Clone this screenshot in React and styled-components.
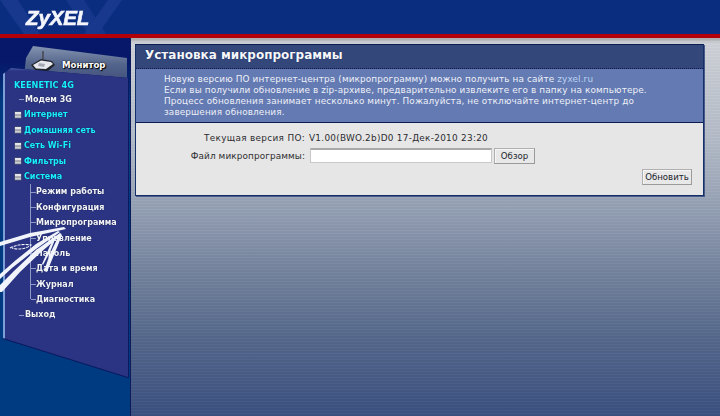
import React from "react";
import styled, { createGlobalStyle } from "styled-components";

const Global = createGlobalStyle`
  html, body { margin: 0; padding: 0; background: #003a80; }
  body { width: 720px; height: 416px; overflow: hidden; font-family: "DejaVu Sans", sans-serif; }
`;

const Page = styled.div`
  position: relative;
  width: 720px;
  height: 416px;
  display: flex;
  flex-direction: column;
  overflow: hidden;
`;

const Header = styled.header`
  position: relative;
  height: 34px;
  flex: none;
  background: #0b2d80;
  display: flex;
  align-items: center;
  padding-left: 26px;
  overflow: hidden;
`;

const HeaderArt = styled.svg`
  position: absolute;
  left: 0;
  top: 0;
`;

const Logo = styled.div`
  position: relative;
  font-family: "Liberation Sans", sans-serif;
  font-weight: 700;
  font-style: italic;
  font-size: 20.5px;
  letter-spacing: -0.1px;
  color: #f4f6fb;
  line-height: 34px;
  margin-top: 1px;
  -webkit-text-stroke: 0.6px #f4f6fb;
  filter: blur(0.3px);
`;

const RedRule = styled.div`
  height: 4px;
  flex: none;
  background: #b20008;
`;

const Body = styled.div`
  flex: 1;
  display: flex;
  min-height: 0;
`;

const Side = styled.aside`
  width: 130px;
  flex: none;
  background: linear-gradient(180deg, #07186a 0, #07186a 24px, #003a80 64px, #003a80 100%);
  padding-top: 8px;
  display: flex;
  flex-direction: column;
  box-sizing: border-box;
`;

const Tab = styled.div`
  width: 105px;
  height: 40px;
  margin-left: 23px;
  flex: none;
  background: linear-gradient(180deg, #8494b0 0, #54658c 45%, #3a4a78 100%);
  clip-path: polygon(3px 12px, 10px 0, 104px 12px, 104px 40px, 0 40px);
  display: flex;
  align-items: flex-start;
  gap: 6px;
  padding: 14px 0 0 7px;
  box-sizing: border-box;
`;

const TabLabel = styled.span`
  font-size: 8.6px;
  font-weight: 700;
  color: #fff;
  line-height: 12px;
  margin-top: -1px;
  text-shadow: 0 0 2px #000, 1px 1px 1px #000;
`;

const PanelEdge = styled.div`
  margin: -18px 0 0 0;
  width: 129px;
  height: 309px;
  flex: none;
  filter: drop-shadow(0 1px 0 #0a1a60) drop-shadow(1px 0 0 #0a1a60);
`;

const Panel = styled.nav`
  width: 126px;
  height: 100%;
  margin-left: 3px;
  box-sizing: border-box;
  background: linear-gradient(180deg, #4a5ca8 0, #2a3482 3px, #2a3482 100%);
  border-left: 2px solid #7d9fd8;
  clip-path: polygon(0 6px, 8px 0, 125px 10px, 125px 100%, 0 270px);
  padding: 11px 0 0 9px;
  display: flex;
  flex-direction: column;
`;

const MenuText = styled.span`
  font-size: 8px;
  font-weight: 700;
  line-height: 15.4px;
  height: 15.4px;
  white-space: nowrap;
  color: ${(p) => (p.$cyan ? "#19f0ff" : "#f2f4fa")};
  text-shadow: 0 0 1px rgba(0, 0, 20, 0.7);
`;

const Device = styled(MenuText)`
  line-height: 12px;
  height: 13px;
  font-size: 8.2px;
`;

const Tick = styled(MenuText)`
  display: flex;
  align-items: center;
  margin-left: 11px;
  &::before {
    content: "";
    width: 5px;
    height: 1px;
    margin-left: -6px;
    margin-right: 1px;
    background: #8f9ac8;
  }
`;

const Group = styled(MenuText)`
  display: flex;
  align-items: center;
  gap: 3px;
  margin-left: 1px;
`;

const Square = styled.i`
  width: 6px;
  height: 6px;
  flex: none;
  background: linear-gradient(180deg, #e4e6ea 0, #e4e6ea 2px, #70747e 3px, #d8dae0 4px, #a0a4ac 100%);
  box-shadow: 0 0 0 0.5px #555a70;
`;

const SubList = styled.div`
  display: flex;
  flex-direction: column;
  margin-left: 16px;
  padding-left: 6px;
  background: linear-gradient(#8f9ac8, #8f9ac8) no-repeat 0 0 / 1px calc(100% - 8px);
`;

const SubItem = styled(MenuText)`
  display: flex;
  align-items: center;
  &::before {
    content: "";
    width: 5px;
    height: 1px;
    margin-left: -5px;
    background: #8f9ac8;
  }
`;

const Main = styled.main`
  flex: 1;
  min-width: 0;
  padding: 6px 16px 0 4px;
  background:
    repeating-linear-gradient(180deg, rgba(255, 255, 255, 0.03) 0, rgba(255, 255, 255, 0.03) 1px, rgba(0, 0, 0, 0.02) 1px, rgba(0, 0, 0, 0.02) 3px),
    linear-gradient(180deg, #a8a8a8 0, #cfd2d8 5px, #b4bcc8 100px, #9aa5b8 160px, #76859f 230px, #55688c 300px, #3a5080 378px);
  border-left: 1px solid #0c1c5a;
`;

const Card = styled.section`
  border: 1px solid #14306a;
  border-top-color: #0a1c50;
  box-shadow: 1px 1px 0 #4a5a88;
  display: flex;
  flex-direction: column;
  height: 152px;
  box-sizing: border-box;
`;

const TitleBar = styled.h1`
  margin: 0;
  height: 24px;
  flex: none;
  box-sizing: border-box;
  padding-left: 9px;
  background: #33477a;
  border-bottom: 1px dotted #0c1c50;
  color: #f6f7fb;
  font-size: 12px;
  font-weight: 700;
  line-height: 21px;
  letter-spacing: 0;
  text-shadow: 0 0 1px #0a1a50;
`;

const Intro = styled.div`
  height: 54px;
  flex: none;
  box-sizing: border-box;
  background: #637ab2;
  border-bottom: 1px solid #0c1c50;
  padding: 5px 0 0 28px;
  color: #eef0f8;
  font-size: 8.9px;
  line-height: 11px;
  white-space: nowrap;
`;

const Line = styled.div`
  height: 11px;
  letter-spacing: 0.12px;
`;

const SiteLink = styled.span`
  color: #bcd2f2;
`;

const Content = styled.div`
  flex: 1;
  background: #e6e6e6;
  display: flex;
  flex-direction: column;
  padding: 8px 11px 0 0;
  color: #2c2c30;
  font-size: 8.9px;
`;

const Row = styled.div`
  display: flex;
  align-items: center;
  height: ${(p) => p.$h}px;
`;

const RowLabel = styled.span`
  width: 169px;
  flex: none;
  text-align: right;
  white-space: nowrap;
  letter-spacing: ${(p) => p.$sp || "0.1px"};
`;

const RowValue = styled.span`
  margin-left: 4px;
  white-space: nowrap;
  letter-spacing: 0.28px;
`;

const FileInput = styled.div`
  width: 182px;
  height: 15px;
  margin-left: 5px;
  flex: none;
  box-sizing: border-box;
  background: #fff;
  border: 1px solid #c8c8c8;
  border-top: 2px solid #a8a8a8;
`;

const Btn = styled.button`
  box-sizing: border-box;
  height: 16px;
  width: ${(p) => p.$w}px;
  margin-left: ${(p) => p.$ml || 0}px;
  padding: 0;
  flex: none;
  background: #e8e8e8;
  border: 1px solid #b0b0b0;
  border-right-color: #9a9a9a;
  border-bottom-color: #9a9a9a;
  box-shadow: inset 1px 1px 0 #f6f6f6;
  font-family: "DejaVu Sans", sans-serif;
  font-size: 8.6px;
  color: #20242c;
`;

const Actions = styled.div`
  display: flex;
  justify-content: flex-end;
  margin-top: 3px;
`;

const Scribble = styled.svg`
  position: absolute;
  left: 0;
  top: 222px;
  pointer-events: none;
`;

const RouterIcon = () => (
  <svg width="26" height="24" viewBox="0 0 26 24" style={{ flex: "none", marginTop: -10 }}>
    <path d="M13 1 V9" stroke="#4a4a50" strokeWidth="1.6" />
    <path d="M1 15 L11 9 L22 11 L25 15 L17 22 L6 21 Z" fill="#20242c" />
    <path d="M3 15 L11 10.5 L21 12 L23 14 L16 19 L6 18.5 Z" fill="#e6e8ee" />
    <path d="M9 13 L15 14 L14 17 L8 16 Z" fill="#a4a8b4" />
  </svg>
);

export default function App() {
  return (
    <Page>
      <Global />
      <Header>
        <HeaderArt width="240" height="34" viewBox="0 0 240 34">
          <path d="M0 0 H18 L40 34 H24 Z" fill="#17388c" />
          <path d="M66 0 H84 L106 34 H88 Z" fill="#15368a" />
          <path d="M84 34 L108 0 H122 L98 34 Z" fill="#17388c" />
        </HeaderArt>
        <Logo>ZyXEL</Logo>
      </Header>
      <RedRule />
      <Body>
        <Side>
          <Tab>
            <RouterIcon />
            <TabLabel>Монитор</TabLabel>
          </Tab>
          <PanelEdge>
            <Panel>
              <Device $cyan>KEENETIC 4G</Device>
              <Tick>Модем 3G</Tick>
              <Group $cyan><Square />Интернет</Group>
              <Group $cyan><Square />Домашняя сеть</Group>
              <Group $cyan><Square />Сеть Wi-Fi</Group>
              <Group $cyan><Square />Фильтры</Group>
              <Group $cyan><Square />Система</Group>
              <SubList>
                <SubItem>Режим работы</SubItem>
                <SubItem>Конфигурация</SubItem>
                <SubItem>Микропрограмма</SubItem>
                <SubItem>Управление</SubItem>
                <SubItem>Пароль</SubItem>
                <SubItem>Дата и время</SubItem>
                <SubItem>Журнал</SubItem>
                <SubItem>Диагностика</SubItem>
              </SubList>
              <Tick>Выход</Tick>
            </Panel>
          </PanelEdge>
        </Side>
        <Main>
          <Card>
            <TitleBar>Установка микропрограммы</TitleBar>
            <Intro>
              <Line>Новую версию ПО интернет-центра (микропрограмму) можно получить на сайте <SiteLink>zyxel.ru</SiteLink></Line>
              <Line>Если вы получили обновление в zip-архиве, предварительно извлеките его в папку на компьютере.</Line>
              <Line>Процесс обновления занимает несколько минут. Пожалуйста, не отключайте интернет-центр до</Line>
              <Line>завершения обновления.</Line>
            </Intro>
            <Content>
              <Row $h={14}>
                <RowLabel $sp="0.32px">Текущая версия ПО:</RowLabel>
                <RowValue>V1.00(BWO.2b)D0 17-Дек-2010 23:20</RowValue>
              </Row>
              <Row $h={21}>
                <RowLabel>Файл микропрограммы:</RowLabel>
                <FileInput />
                <Btn $w={41} $ml={2}>Обзор</Btn>
              </Row>
              <Actions>
                <Btn $w={50}>Обновить</Btn>
              </Actions>
            </Content>
          </Card>
        </Main>
      </Body>
      <Scribble width="70" height="72" viewBox="0 0 70 72">
        <g fill="#f2f4fc">
          <path d="M64 5 L66 7 L30 15 L0 24 L0 20 L30 11 Z" />
          <path d="M58 9 L60 10 L36 27 L12 46 L0 57 L0 52 L16 38 L36 22 Z" />
          <path d="M60 11 L61 13 L40 31 L20 50 L2 70 L0 70 L0 63 L14 49 L36 28 Z" />
          <path d="M60 11 L62 13 L56 28 L47 50 L44 49 L50 32 Z" />
          <path d="M55 13 L56 15 L50 30 L43 43 L42 42 L49 26 Z" />
        </g>
        <path d="M10 26 C18 22 26 22 31 23 C26 27 18 28 12 26" fill="none" stroke="#f2f4fc" strokeWidth="1.1" strokeDasharray="3 1" />
      </Scribble>
    </Page>
  );
}
